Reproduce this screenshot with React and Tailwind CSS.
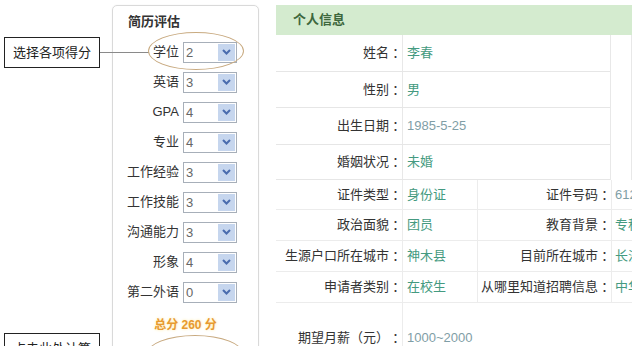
import React from 'react';

const FONT = "font-['Liberation_Sans','Noto_Sans_CJK_SC',sans-serif]";

const SCORES = [
  { label: '学位', value: '2' },
  { label: '英语', value: '3' },
  { label: 'GPA', value: '4' },
  { label: '专业', value: '4' },
  { label: '工作经验', value: '3' },
  { label: '工作技能', value: '3' },
  { label: '沟通能力', value: '3' },
  { label: '形象', value: '4' },
  { label: '第二外语', value: '0' },
];

const TOP_ROWS = [
  { label: '姓名', value: '李春', h: 'h-[37px]' },
  { label: '性别', value: '男', h: 'h-[36px]' },
  { label: '出生日期', value: '1985-5-25', h: 'h-[37px]', num: true },
  { label: '婚姻状况', value: '未婚', h: 'h-[35px]' },
];

const PAIR_ROWS = [
  { a: '证件类型', av: '身份证', b: '证件号码', bv: '612725198505', h: 'h-[30px]', num: true },
  { a: '政治面貌', av: '团员', b: '教育背景', bv: '专科', h: 'h-[31px]' },
  { a: '生源户口所在城市', av: '神木县', b: '目前所在城市', bv: '长沙', h: 'h-[31px]' },
  { a: '申请者类别', av: '在校生', b: '从哪里知道招聘信息', bv: '中华英才网', h: 'h-[31px]' },
];

// label with a centred full-width colon
function Label({ text }) {
  return (
    <>
      {text}
      <span className="font-['Noto_Sans_CJK_TC',sans-serif]">：</span>
    </>
  );
}

function Select({ value }) {
  return (
    <div className="flex h-[21px] w-[54px] items-center justify-between border border-[#a7afb9] bg-white pl-[2px] pr-[1px]">
      <span className="text-[13px] leading-none text-[#666]">{value}</span>
      <span className="flex h-[17px] w-[17px] items-center justify-center bg-[#c6d6ee]">
        <svg width="9" height="6" viewBox="0 0 9 6">
          <path d="M1 1 L4.5 4.5 L8 1" fill="none" stroke="#4a6cae" strokeWidth="2" />
        </svg>
      </span>
    </div>
  );
}

function Callout({ children, className }) {
  return (
    <div className={`flex h-[31px] w-[96px] shrink-0 items-center justify-center border border-[#222] bg-white text-[13px] text-[#222] ${className}`}>
      {children}
    </div>
  );
}

export default function App() {
  return (
    <div className={`relative flex h-[346px] w-[640px] overflow-hidden bg-white ${FONT}`}>
      {/* callout column */}
      <div className="flex w-[112px] shrink-0 flex-col pl-[4px] pt-[37px]">
        <Callout>选择各项得分</Callout>
        <Callout className="mt-[265px] items-start pt-[5px]">点击此处计算</Callout>
      </div>

      {/* score panel */}
      <div className="mt-[5px] h-[370px] w-[147px] shrink-0 rounded-[5px] border border-[#d9d9d9] pt-[6px] shadow-[0_0_2px_rgba(0,0,0,0.06)]">
        <div className="h-[20px] pl-[15px] text-[13px] font-bold leading-[20px] text-[#333]">简历评估</div>
        <div className="mt-[5px] flex flex-col">
          {SCORES.map((s) => (
            <div key={s.label} className="flex h-[30px] shrink-0 items-center">
              <span className="w-[68px] pr-[2px] text-right text-[13px] text-[#333]">{s.label}</span>
              <span className="ml-[2px]">
                <Select value={s.value} />
              </span>
            </div>
          ))}
        </div>
        <div className="mt-[8px] h-[20px] text-center text-[12px] font-bold leading-[20px] text-[#e79a30] [text-shadow:0_0_3px_#ffe7a0]">
          总分 260 分
        </div>
      </div>

      {/* personal info */}
      <div className="ml-[17px] mt-[5px] flex w-[356px] shrink-0 flex-col text-[13px]">
        <div className="h-[30px] shrink-0 bg-[#d4ebcf] pl-[17px] font-bold leading-[30px] text-[#3d673d]">个人信息</div>
        <div className="flex shrink-0">
          <div className="flex w-[334px] flex-col">
            {TOP_ROWS.map((r) => (
              <div key={r.label} className={`flex shrink-0 ${r.h} border-b border-[#e6e6e6]`}>
                <div className="flex w-[127px] items-center justify-end border-r border-[#e8e8e8] text-[#333]">
                  <Label text={r.label} />
                </div>
                <div className={`flex items-center pl-[4px] ${r.num ? 'text-[#7f9ea6]' : 'text-[#449a80]'}`}>{r.value}</div>
              </div>
            ))}
          </div>
          <div className="w-[22px] border-x border-[#e8e8e8]" />
        </div>
        {PAIR_ROWS.map((r) => (
          <div key={r.a} className={`flex shrink-0 ${r.h} border-b border-[#ececec]`}>
            <div className="flex w-[127px] items-center justify-end whitespace-nowrap border-r border-[#ececec] text-[#333]">
              <Label text={r.a} />
            </div>
            <div className="flex w-[74px] items-center pl-[4px] text-[#449a80]">{r.av}</div>
            <div className="flex w-[135px] items-center justify-end whitespace-nowrap border-x border-[#ececec] text-[#333]">
              <Label text={r.b} />
            </div>
            <div className={`flex w-[20px] items-center overflow-hidden whitespace-nowrap pl-[3px] ${r.num ? 'text-[#7f9ea6]' : 'text-[#449a80]'}`}>{r.bv}</div>
          </div>
        ))}
        <div className="flex h-[68px] shrink-0">
          <div className="flex w-[127px] items-end justify-end whitespace-nowrap border-r border-[#ececec] pb-[24px] text-[#333]">
            <Label text="期望月薪（元）" />
          </div>
          <div className="flex items-end whitespace-nowrap pb-[24px] pl-[4px] text-[#7f9ea6]">1000~2000</div>
        </div>
      </div>

      {/* overlays: connector and ovals */}
      <div className="absolute left-[100px] top-[52px] h-px w-[49px] bg-[#8a8a8a]" />
      <div className="absolute left-[148px] top-[32px] h-[38px] w-[96px] rounded-[50%] border-[1.5px] border-[#c8aa80]" />
      <div className="absolute left-[146px] top-[335px] h-[40px] w-[98px] rounded-[50%] border-[1.5px] border-[#c8aa80]" />
    </div>
  );
}
